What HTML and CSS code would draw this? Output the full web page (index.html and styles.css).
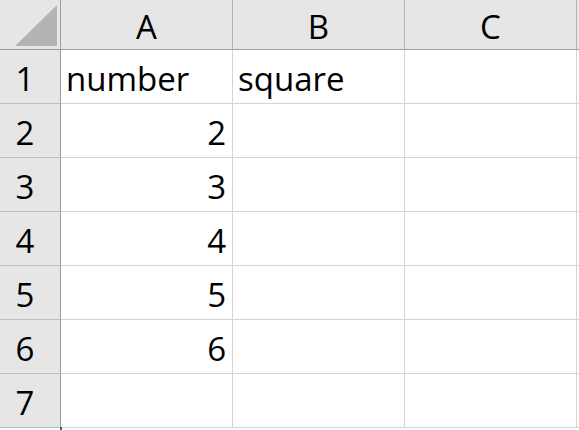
FILE: index.html
```html
<!DOCTYPE html>
<html>
<head>
<meta charset="utf-8">
<link rel="stylesheet" href="styles.css">
</head>
<body>
<div class="sheet">
  <div class="corner"><svg width="60" height="49" viewBox="0 0 60 49"><polygon points="57,5 57,46 15,46" fill="#b4b4b4"/></svg></div>
  <div class="colhead">A</div>
  <div class="colhead">B</div>
  <div class="colhead">C</div>
  <div class="colhead edge"></div>

  <div class="rowhead">1</div><div class="cell">number</div><div class="cell">square</div><div class="cell"></div><div class="pad"></div>
  <div class="rowhead">2</div><div class="cell num">2</div><div class="cell"></div><div class="cell"></div><div class="pad"></div>
  <div class="rowhead">3</div><div class="cell num">3</div><div class="cell"></div><div class="cell"></div><div class="pad"></div>
  <div class="rowhead">4</div><div class="cell num">4</div><div class="cell"></div><div class="cell"></div><div class="pad"></div>
  <div class="rowhead">5</div><div class="cell num">5</div><div class="cell"></div><div class="cell"></div><div class="pad"></div>
  <div class="rowhead">6</div><div class="cell num">6</div><div class="cell"></div><div class="cell"></div><div class="pad"></div>
  <div class="rowhead">7</div><div class="cell"></div><div class="cell"></div><div class="cell"></div><div class="pad"></div>
  <div class="handle"></div>
</div>
</body>
</html>
```

FILE: styles.css
```css
html, body {
  margin: 0;
  padding: 0;
  background: #ffffff;
}
.sheet {
  position: relative;
  display: grid;
  grid-template-columns: 61px 172px 172px 172px 2px;
  grid-template-rows: 50px repeat(7, 54px);
  font-family: "Open Sans", "Noto Sans", sans-serif;
  font-size: 33px;
  color: #000;
  width: 579px;
  height: 430px;
  overflow: hidden;
}
.sheet > div {
  box-sizing: border-box;
}
.corner {
  background: #e6e6e6;
  border-right: 1px solid #9e9e9e;
  border-bottom: 1px solid #9e9e9e;
}
.corner svg { display: block; }
.colhead {
  background: #e6e6e6;
  border-right: 1px solid #b1b1b1;
  border-bottom: 1px solid #9e9e9e;
  display: flex;
  align-items: flex-end;
  justify-content: center;
  line-height: 45px;
  padding-bottom: 0;
}
.colhead.edge {
  border-right: none;
}
.rowhead {
  background: #e6e6e6;
  border-right: 1px solid #9e9e9e;
  border-bottom: 1px solid #bdbdbd;
  display: flex;
  align-items: flex-end;
  justify-content: center;
  padding-right: 10px;
  padding-bottom: 2px;
  line-height: 45px;
}
.cell {
  border-right: 1px solid #d4d4d4;
  border-bottom: 1px solid #d4d4d4;
  display: flex;
  align-items: flex-end;
  padding: 0 6px 2px 5px;
  line-height: 45px;
  white-space: nowrap;
}
.cell.num {
  justify-content: flex-end;
}
.pad {
  border-bottom: 1px solid #d4d4d4;
}
.handle {
  position: absolute;
  left: 60px;
  top: 427px;
  width: 2px;
  height: 3px;
  background: #217346;
}
```
